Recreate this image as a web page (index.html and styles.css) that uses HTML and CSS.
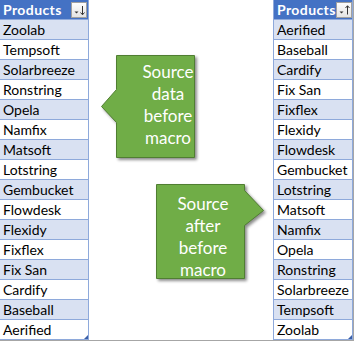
FILE: index.html
```html
<!DOCTYPE html>
<html>
<head>
<meta charset="utf-8">
<link rel="stylesheet" href="styles.css">
</head>
<body>
<div class="sheet">
  <div class="table left">
    <div class="hdr"><span class="hdr-text">Products</span>
      <span class="filter"><svg width="14" height="14" viewBox="0 0 14 14"><path d="M2.5 8.5h4l-2 2z" fill="#333"/><path d="M10.5 3v8.5" stroke="#333" stroke-width="1"/><path d="M8.5 9.5l2 2.3 2-2.3" fill="none" stroke="#333" stroke-width="1"/></svg></span>
    </div>
    <div class="row band">Zoolab</div>
    <div class="row">Tempsoft</div>
    <div class="row band">Solarbreeze</div>
    <div class="row">Ronstring</div>
    <div class="row band">Opela</div>
    <div class="row">Namfix</div>
    <div class="row band">Matsoft</div>
    <div class="row">Lotstring</div>
    <div class="row band">Gembucket</div>
    <div class="row">Flowdesk</div>
    <div class="row band">Flexidy</div>
    <div class="row">Fixflex</div>
    <div class="row band">Fix San</div>
    <div class="row">Cardify</div>
    <div class="row band">Baseball</div>
    <div class="row">Aerified</div>
    <span class="handle"></span>
  </div>

  <div class="table right">
    <div class="hdr"><span class="hdr-text">Products</span>
      <span class="filter"><svg width="14" height="14" viewBox="0 0 14 14"><path d="M2.5 8.5h4l-2 2z" fill="#333"/><path d="M10.5 3v8.5" stroke="#333" stroke-width="1"/><path d="M8.5 5l2-2.3 2 2.3" fill="none" stroke="#333" stroke-width="1"/></svg></span>
    </div>
    <div class="row band">Aerified</div>
    <div class="row">Baseball</div>
    <div class="row band">Cardify</div>
    <div class="row">Fix San</div>
    <div class="row band">Fixflex</div>
    <div class="row">Flexidy</div>
    <div class="row band">Flowdesk</div>
    <div class="row">Gembucket</div>
    <div class="row band">Lotstring</div>
    <div class="row">Matsoft</div>
    <div class="row band">Namfix</div>
    <div class="row">Opela</div>
    <div class="row band">Ronstring</div>
    <div class="row">Solarbreeze</div>
    <div class="row band">Tempsoft</div>
    <div class="row">Zoolab</div>
    <span class="handle"></span>
  </div>

  <div class="callout c1">
    <svg class="shape" width="110" height="120" viewBox="0 0 110 120">
      <path d="M18.5 4.5h78v102h-78v-35l-15-16 15-17z" fill="#70ad47" stroke="#507e32" stroke-width="1"/>
    </svg>
    <div class="ctext">Source<br>data<br>before<br>macro</div>
  </div>

  <div class="callout c2">
    <svg class="shape" width="120" height="110" viewBox="0 0 120 110">
      <path d="M4.5 3.5h88v6l19 20-19 15v53h-88z" fill="#70ad47" stroke="#507e32" stroke-width="1"/>
    </svg>
    <div class="ctext">Source<br>after<br>before<br>macro</div>
  </div>
</div>
</body>
</html>
```

FILE: styles.css
```css
html, body {
  margin: 0;
  padding: 0;
  background: #fff;
}

.sheet {
  position: relative;
  width: 354px;
  height: 341px;
  box-sizing: border-box;
  border-right: 1px solid #a6a6a6;
  border-bottom: 1px solid #a6a6a6;
  display: flex;
  justify-content: space-between;
  font-family: Lato, "Open Sans", sans-serif;
  font-size: 14px;
  color: #000;
  overflow: hidden;
}

.table {
  position: relative;
  display: flex;
  flex-direction: column;
  box-sizing: border-box;
}

.table.left {
  width: 89px;
  border-right: 1px solid #8ea9db;
}

.table.right {
  width: 80px;
  border-left: 1px solid #8ea9db;
  border-right: 1px solid #8ea9db;
}

.hdr {
  height: 20px;
  box-sizing: border-box;
  border-bottom: 1px solid #8ea9db;
  background: #4472c4;
  color: #fff;
  font-weight: bold;
  display: flex;
  align-items: center;
  justify-content: space-between;
  padding-left: 3px;
  padding-right: 1px;
}

.hdr-text {
  letter-spacing: 0.4px;
}

.filter {
  width: 16px;
  height: 16px;
  box-sizing: border-box;
  border: 1px solid #a0a0a0;
  background: linear-gradient(#fdfdfd, #e4e4e4);
  display: flex;
  align-items: center;
  justify-content: center;
}

.filter svg {
  display: block;
}

.row {
  height: 20px;
  box-sizing: border-box;
  border-bottom: 1px solid #8ea9db;
  padding-left: 3px;
  line-height: 19px;
  white-space: nowrap;
}

.row.band {
  background: #d9e1f2;
}

.handle {
  position: absolute;
  right: 0;
  bottom: 1px;
  width: 0;
  height: 0;
  border-left: 4px solid transparent;
  border-bottom: 4px solid #3a5fa8;
}

.callout {
  position: absolute;
}

.callout .shape {
  display: block;
  filter: drop-shadow(2px 2px 1.5px rgba(0, 0, 0, 0.45));
}

.ctext {
  position: absolute;
  color: #fff;
  font-size: 17px;
  line-height: 22px;
  text-align: center;
}

.c1 {
  left: 98px;
  top: 51px;
}

.c1 .ctext {
  left: 40px;
  top: 10px;
  width: 60px;
}

.c2 {
  left: 152px;
  top: 181px;
}

.c2 .ctext {
  left: 20px;
  top: 12px;
  width: 62px;
}
```
